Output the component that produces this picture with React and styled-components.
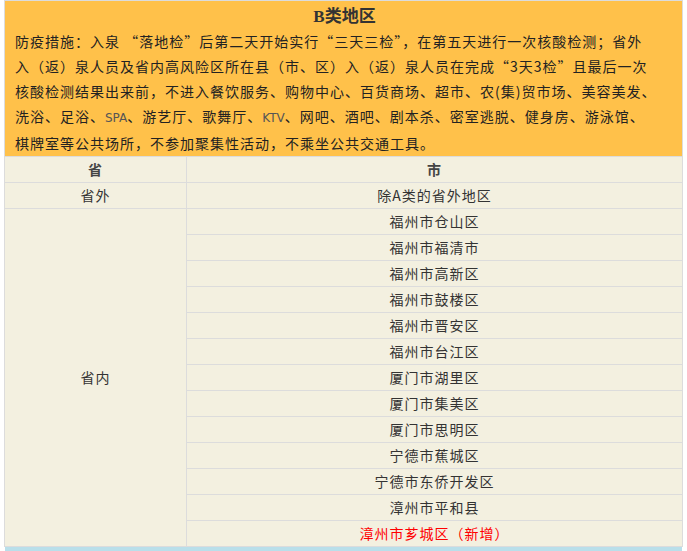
import React from "react";
import styled, { createGlobalStyle } from "styled-components";

const GlobalStyle = createGlobalStyle`
  html, body {
    margin: 0;
    padding: 0;
    background: #fff;
  }
  body {
    font-family: "Noto Sans CJK SC", "Noto Sans", sans-serif;
    color: #333;
  }
`;

const cities = [
  "福州市仓山区",
  "福州市福清市",
  "福州市高新区",
  "福州市鼓楼区",
  "福州市晋安区",
  "福州市台江区",
  "厦门市湖里区",
  "厦门市集美区",
  "厦门市思明区",
  "宁德市蕉城区",
  "宁德市东侨开发区",
  "漳州市平和县",
];

const App = () => {
  return (
    <>
      <GlobalStyle />
      <Page lang="zh-CN">
        <Table>
          <Notice>
            <Title>B类地区</Title>
            <Measures>
              <Line>防疫措施：入泉 “落地检”后第二天开始实行“三天三检”，在第五天进行一次核酸检测；省外</Line>
              <Line>入（返）泉人员及省内高风险区所在县（市、区）入（返）泉人员在完成“3天3检”且最后一次</Line>
              <Line>核酸检测结果出来前，不进入餐饮服务、购物中心、百货商场、超市、农(集)贸市场、美容美发、</Line>
              <Line>洗浴、足浴、<Latin>SPA</Latin>、游艺厅、歌舞厅、<Latin>KTV</Latin>、网吧、酒吧、剧本杀、密室逃脱、健身房、游泳馆、</Line>
              <Line>棋牌室等公共场所，不参加聚集性活动，不乘坐公共交通工具。</Line>
            </Measures>
          </Notice>

          <Cell $head>省</Cell>
          <Cell $head>市</Cell>

          <Cell>省外</Cell>
          <Cell>除A类的省外地区</Cell>

          <Cell $span={13}>省内</Cell>
          {cities.map((c) => (
            <Cell key={c}>{c}</Cell>
          ))}
          <Cell $added>漳州市芗城区（新增）</Cell>
        </Table>
        <Strip />
      </Page>
    </>
  );
};

const Page = styled.div`
  width: 679px;
  margin-left: 4px;
`;

const Table = styled.div`
  display: grid;
  grid-template-columns: 181px 1fr;
  grid-template-rows: 155px;
  grid-auto-rows: 25px;
  gap: 1px;
  background: #dcdcdc;
  border: 1px solid #dcdcdc;
`;

const Notice = styled.div`
  grid-column: 1 / -1;
  box-sizing: border-box;
  background: #ffc14a;
  padding: 3px 8px 0 10px;
`;

const Title = styled.div`
  text-align: center;
  font-family: "Liberation Serif", "Noto Sans CJK SC", serif;
  font-weight: bold;
  font-size: 17px;
  line-height: 25px;
  color: #333;
`;

const Measures = styled.div`
  font-size: 14px;
  line-height: 25px;
  letter-spacing: 1px;
  color: #222;
`;

const Line = styled.div`
  white-space: nowrap;
`;

const Latin = styled.span`
  font-family: "DejaVu Sans", sans-serif;
  font-size: 12px;
  letter-spacing: 0;
  color: #555;
`;

const Cell = styled.div`
  background: #f3f0e0;
  grid-row: ${({ $span }) => ($span ? `span ${$span}` : "auto")};
  display: flex;
  align-items: center;
  justify-content: center;
  padding-bottom: 2px;
  font-size: 14px;
  line-height: 20px;
  letter-spacing: 1px;
  font-weight: ${({ $head }) => ($head ? "bold" : "normal")};
  color: ${({ $added, $head }) => ($added ? "#ff0000" : $head ? "#444" : "#333")};
`;

const Strip = styled.div`
  height: 6px;
  background: #b9dfea;
  margin: 0 1px;
`;

export default App;
